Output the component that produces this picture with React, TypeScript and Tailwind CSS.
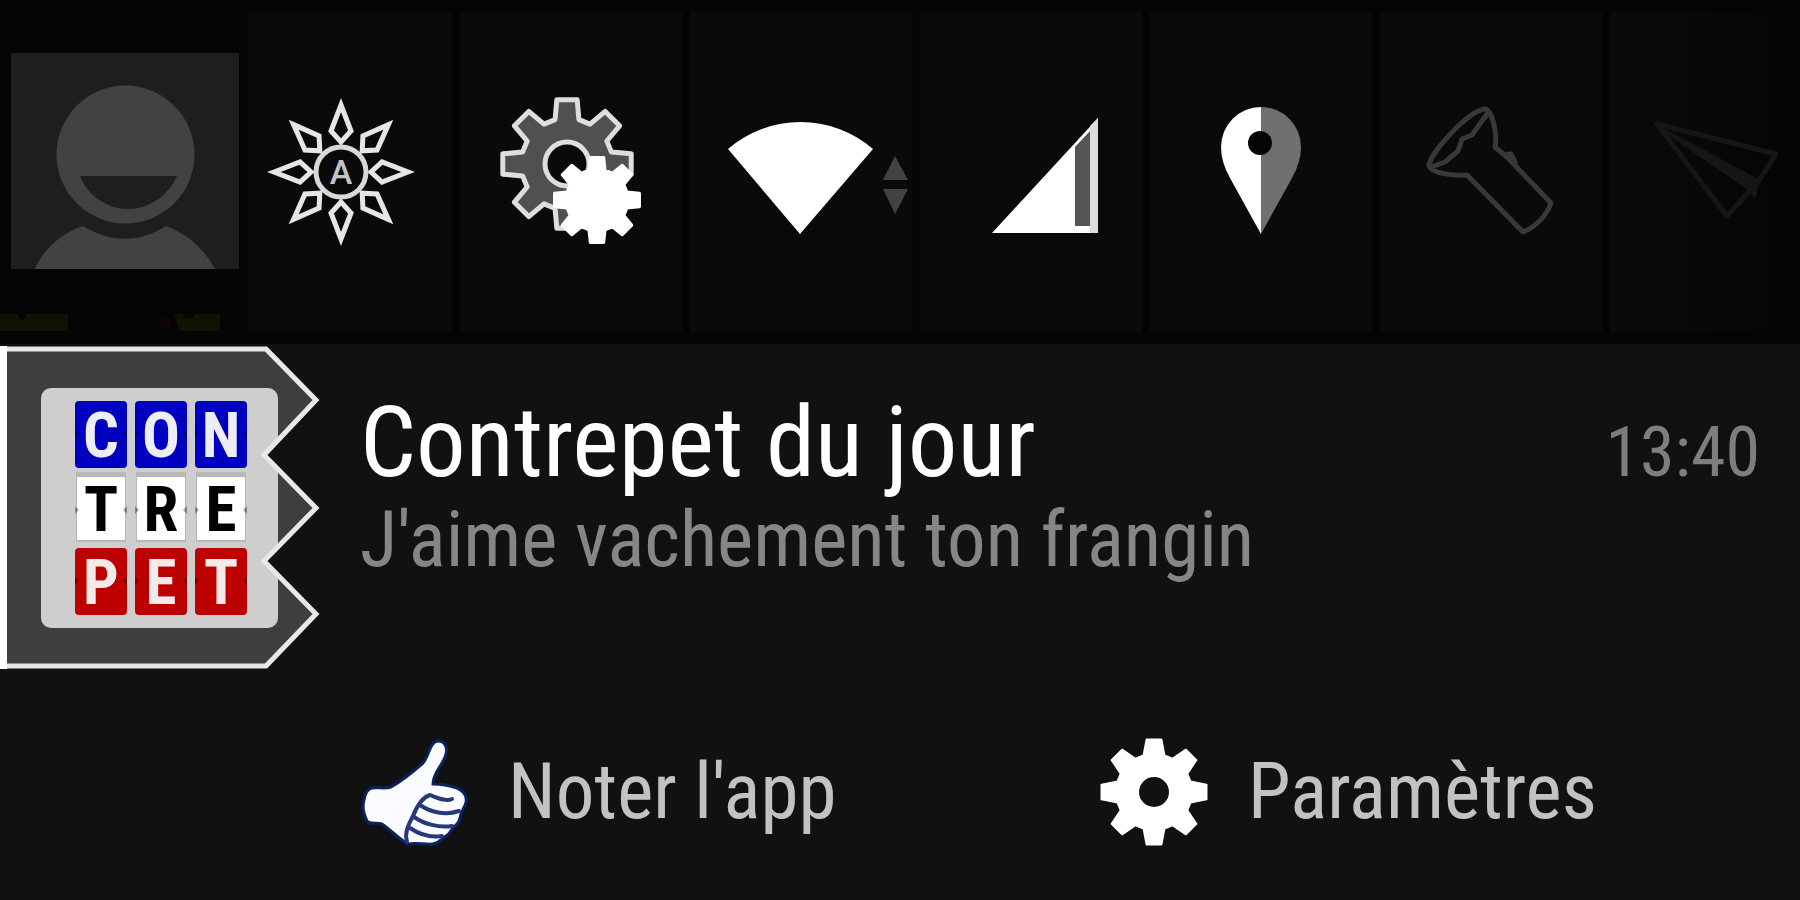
import React from "react";

function gearPath(cx: number, cy: number, outer: number, root: number, tipDeg: number, baseDeg: number) {
  const point = (r: number, deg: number) => {
    const a = (deg * Math.PI) / 180;
    return `${(cx + r * Math.sin(a)).toFixed(2)} ${(cy - r * Math.cos(a)).toFixed(2)}`;
  };
  const points: string[] = [];
  for (let i = 0; i < 8; i++) {
    const c = i * 45;
    points.push(point(root, c - baseDeg), point(outer, c - tipDeg), point(outer, c + tipDeg), point(root, c + baseDeg));
  }
  return `M${points.join("L")}Z`;
}

function circlePath(cx: number, cy: number, r: number) {
  return `M${cx - r} ${cy}a${r} ${r} 0 1 0 ${2 * r} 0a${r} ${r} 0 1 0 ${-2 * r} 0Z`;
}

function Tile({ label, box, className = "bg-[#0a0a0a]", children }: {
  label: string;
  box: string;
  className?: string;
  children: React.ReactNode;
}) {
  return (
    <button type="button" aria-label={label} className={`block h-80 min-w-0 ${className}`}>
      <svg viewBox={box} className="block h-full w-full" aria-hidden="true">
        {children}
      </svg>
    </button>
  );
}

function QuickSettings() {
  return (
    <header className="grid grid-cols-[240fr_204fr_222fr_222fr_222fr_222fr_222fr_190fr] gap-2 bg-[#040404] py-3">
      <Tile label="Profil" box="0 12 240 320" className="bg-[#040404]">
        <rect x="11" y="53" width="228" height="216" fill="#1e1e1e" />
        <circle cx="125.500" cy="154.500" r="69" fill="#424244" />
        <path d="M80 176H177C168 196 149 209 128 209S88 196 80 176Z" fill="#1e1e1e" />
        <path d="M35 269C44 248 62 233 83 226C110 243 140 243 166 226C188 234 205 250 215 269Z" fill="#424244" />
        <path d="M0 314H18Q22 326 27 314H68V331H0Z" fill="#101204" />
        <path d="M174 314H182Q189 324 195 314H220V331H180Z" fill="#101204" />
        <circle cx="165" cy="322" r="6" fill="#100505" />
      </Tile>

      <Tile label="Luminosité" box="248 12 204 320">
        <g fill="none" stroke="#e6e6e6" strokeWidth="5" strokeMiterlimit="10">
          <circle cx="341" cy="172" r="25" stroke="#d8d8d8" />
          {[0, 45, 90, 135, 180, 225, 270, 315].map((angle) => (
            <path key={angle} d="M341 105L351 131L341 142L331 131Z" transform={`rotate(${angle} 341 172)`} />
          ))}
        </g>
        <text x="341" y="184" textAnchor="middle" fill="#c4c4c4" className="font-['Roboto',sans-serif] text-[34px] font-medium">
          A
        </text>
      </Tile>

      <Tile label="Réglages" box="460 12 222 320">
        <path
          d={gearPath(567, 164, 65, 46, 9, 15) + circlePath(567, 164, 22)}
          fill="#505050"
          fillRule="evenodd"
          stroke="#dedede"
          strokeWidth="5"
          strokeLinejoin="round"
        />
        <path d={gearPath(597, 200, 43, 31, 9, 15)} fill="#fff" stroke="#fff" strokeWidth="3" strokeLinejoin="round" />
      </Tile>

      <Tile label="Wi-Fi" box="690 12 222 320">
        <path d="M800 234L728 149A111 111 0 0 1 873 149Z" fill="#fff" />
        <path d="M895 156L908 180H883ZM883 189H908L895 214Z" fill="#424242" />
      </Tile>

      <Tile label="Réseau mobile" box="920 12 222 320">
        <path d="M1098 118V233H992Z" fill="#fff" />
        <path d="M1098 118V233H1090V126Z" fill="#dcdcdc" />
        <path d="M1075 147L1090 131V226H1075Z" fill="#555" />
      </Tile>

      <Tile label="Localisation" box="1150 12 222 320">
        <path d="M1261 234L1230 178Q1221 162 1221 147A40 40 0 0 1 1261 107Z" fill="#fff" />
        <path d="M1261 234L1292 178Q1301 162 1301 147A40 40 0 0 0 1261 107Z" fill="#707070" />
        <circle cx="1260" cy="143" r="12" fill="#050505" />
      </Tile>

      <Tile label="Lampe torche" box="1380 12 222 320">
        <g fill="none" stroke="#383838" strokeWidth="5" strokeLinejoin="round" strokeLinecap="round">
          <path d="M1485 109C1491 109 1498 132 1495 147L1508 158L1551 203C1547 215 1536 227 1523 232L1467 175C1452 176 1430 173 1429 165C1431 152 1468 111 1485 109Z" />
          <path d="M1487 114L1472 135L1462 139L1458 151L1445 162L1431 167M1505 155L1511 154L1515 162" />
        </g>
      </Tile>

      <Tile label="Mode avion" box="1610 12 190 320" className="bg-linear-to-r from-[#0a0a0a] via-[#080808] to-[#040404]">
        <g fill="none" stroke="#161616" strokeWidth="5" strokeLinejoin="round">
          <path d="M1657 124L1776 154L1758 182L1727 216Z" />
          <path d="M1662 129L1757 180L1755 196L1748 188Z" fill="#161616" strokeWidth="3" />
        </g>
      </Tile>
    </header>
  );
}

const logoRows = [
  { letters: "CON", y: 401, fill: "#0000c0", ink: "#ededf6" },
  { letters: "TRE", y: 477, fill: "#ffffff", ink: "#000000" },
  { letters: "PET", y: 548, fill: "#bd0000", ink: "#f4eaea" },
];

function AppBadge() {
  const outline = "M4 349H266L316 400L264 455L316 508L264 561L316 614L266 666H4Z";
  return (
    <svg viewBox="0 344 324 328" className="block h-[328px] w-[324px] shrink-0" role="img" aria-label="Contrepet">
      <defs>
        <clipPath id="badge-shape">
          <path d={outline} />
        </clipPath>
      </defs>
      <path d={outline} fill="#3e3e3e" />
      <g clipPath="url(#badge-shape)">
        <rect x="41" y="388" width="237" height="240" rx="10" fill="#cecece" />
        {logoRows.map((row) =>
          row.letters.split("").map((letter, i) => {
            const x = 75 + i * 60;
            const white = row.letters === "TRE";
            const h = white ? 63 : 67;
            return (
              <g key={letter + i}>
                {white && <rect x={x + 1} y={row.y - 5} width="50" height="70" fill="#b8b8b8" />}
                <rect x={white ? x + 2 : x} y={row.y} width={white ? 48 : 52} height={h} rx={white ? 1 : 4} fill={row.fill} />
                <path d={`M${x} ${row.y + 29}l4 4l-4 4ZM${x + 52} ${row.y + 29}l-4 4l4 4Z`} fill="#000" opacity="0.35" />
                <text
                  x={x + 26}
                  y={row.y + (white ? 54 : 56)}
                  textAnchor="middle"
                  fill={row.ink}
                  className="font-['Roboto_Condensed','Roboto',sans-serif] text-[63px] font-bold"
                >
                  {letter}
                </text>
              </g>
            );
          })
        )}
      </g>
      <path d={outline} fill="none" stroke="#e8e8e8" strokeWidth="5" />
      <path d="M0 346H7V669H0Z" fill="#fff" />
    </svg>
  );
}

function ThumbIcon() {
  return (
    <svg viewBox="360 736 108 108" className="block size-[108px] shrink-0" aria-hidden="true">
      <path
        d="M438 739C445 739 448 746 446 752C444 762 433 770 433 782C441 782 451 784 457 786C464 789 467 794 466 800C465 805 462 808 461 812C460 818 459 821 455 824C451 827 450 832 446 834C441 837 440 841 433 842C426 843 416 840 408 842C400 838 392 829 382 822C377 820 370 823 367 819C364 813 362 805 364 798C365 792 367 787 372 786C378 785 385 787 391 785C403 778 415 768 423 761C429 754 430 739 438 739Z"
        fill="#fafcff"
        stroke="#0c2260"
        strokeWidth="3"
      />
      <g fill="none" stroke="#26397a" strokeWidth="4" strokeLinecap="round">
        <path d="M452 797C446 800 438 796 430 793C423 795 417 804 413 814C409 822 404 830 407 840" />
        <path d="M420 803C430 810 445 814 459 809" />
        <path d="M414 815C424 822 439 826 452 824" />
        <path d="M410 826C419 832 431 836 442 834" />
      </g>
    </svg>
  );
}

function CogIcon() {
  return (
    <svg viewBox="1098 736 108 108" className="block size-[108px] shrink-0" aria-hidden="true">
      <path
        d={gearPath(1152, 790, 53, 38, 8, 16) + circlePath(1152, 790, 16)}
        fill="#fff"
        fillRule="evenodd"
        stroke="#fff"
        strokeWidth="2"
        strokeLinejoin="round"
      />
    </svg>
  );
}

export default function App() {
  return (
    <div className="min-h-screen bg-[#111] font-['Roboto_Condensed','Roboto',sans-serif]">
      <QuickSettings />
      <main>
        <article className="flex items-start">
          <AppBadge />
          <div className="min-w-0 flex-1 pt-8 pr-10 pl-9">
            <div className="flex items-baseline justify-between">
              <h1 className="text-[99px] leading-[132px] text-white">Contrepet du jour</h1>
              <time className="text-[70px] leading-[80px] text-[#7e7e7e]">13:40</time>
            </div>
            <p className="text-[77px] leading-[64px] text-[#868686]">J'aime vachement ton frangin</p>
          </div>
        </article>
        <div className="grid grid-cols-[740fr_700fr] pt-16 pl-[360px]">
          <button type="button" className="flex items-center gap-10 text-left text-[77px] leading-[112px] text-[#c2c2c2]">
            <ThumbIcon />
            <span>Noter l'app</span>
          </button>
          <button type="button" className="flex items-center gap-10 text-left text-[77px] leading-[112px] text-[#c2c2c2]">
            <CogIcon />
            <span>Paramètres</span>
          </button>
        </div>
      </main>
    </div>
  );
}
